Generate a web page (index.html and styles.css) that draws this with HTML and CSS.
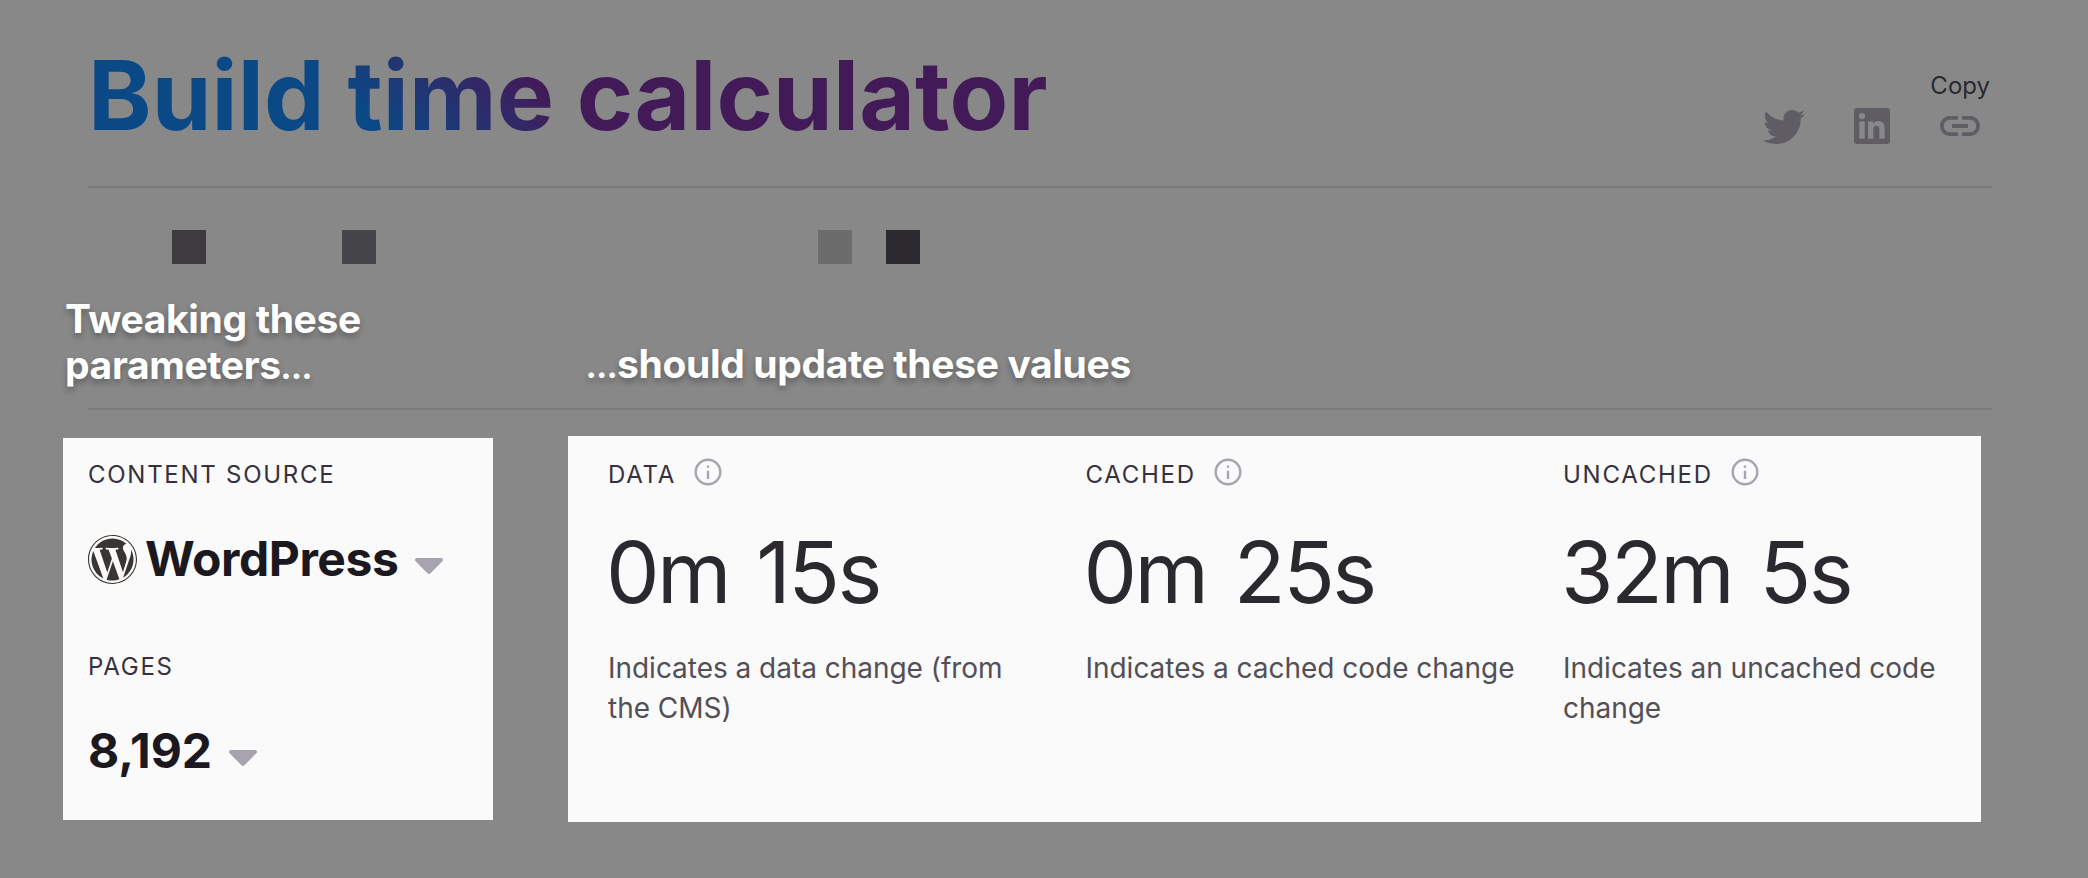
FILE: index.html
```html
<!DOCTYPE html>
<html lang="en">
<head>
<meta charset="utf-8">
<title>Build time calculator</title>
<link rel="stylesheet" href="styles.css">
</head>
<body>
<header class="header">
  <h1 class="title">Build time calculator</h1>
  <div class="share">
    <span class="share-tip">Copy</span>
    <div class="share-icons">
      <svg viewBox="0 0 24 24"><path d="M22.46,6C21.69,6.35 20.86,6.58 20,6.69C20.88,6.16 21.56,5.32 21.88,4.31C21.05,4.81 20.13,5.16 19.16,5.36C18.37,4.5 17.26,4 16,4C13.65,4 11.73,5.92 11.73,8.29C11.73,8.63 11.77,8.96 11.84,9.27C8.28,9.09 5.11,7.38 3,4.79C2.63,5.42 2.42,6.16 2.42,6.94C2.42,8.43 3.17,9.75 4.33,10.5C3.62,10.5 2.96,10.3 2.38,10V10.03C2.38,12.11 3.86,13.85 5.82,14.24C5.46,14.34 5.08,14.39 4.69,14.39C4.42,14.39 4.15,14.36 3.89,14.31C4.43,16 6,17.26 7.89,17.29C6.43,18.45 4.58,19.13 2.56,19.13C2.22,19.13 1.88,19.11 1.54,19.07C3.44,20.29 5.7,21 8.12,21C16,21 20.33,14.46 20.33,8.79C20.33,8.6 20.33,8.42 20.32,8.23C21.16,7.63 21.88,6.87 22.46,6Z"/></svg>
      <svg viewBox="0 0 24 24"><path d="M19.67 3H4.33C3.6 3 3 3.6 3 4.33v15.34C3 20.4 3.6 21 4.33 21h15.34c.73 0 1.33-.6 1.33-1.33V4.33C21 3.6 20.4 3 19.67 3zM8.34 18.34H5.67V9.75h2.67v8.59zM7 8.58a1.55 1.55 0 1 1 0-3.1 1.55 1.55 0 0 1 0 3.1zm11.34 9.76h-2.67v-4.18c0-1 0-2.27-1.39-2.27s-1.6 1.08-1.6 2.2v4.25h-2.66V9.75h2.56v1.17h.04c.36-.67 1.23-1.39 2.53-1.39 2.7 0 3.19 1.78 3.19 4.1v4.71z"/></svg>
      <svg viewBox="0 0 24 24"><path d="M3.9 12c0-1.71 1.39-3.1 3.1-3.1h4V7H7c-2.76 0-5 2.24-5 5s2.24 5 5 5h4v-1.9H7c-1.71 0-3.1-1.39-3.1-3.1zM8 13h8v-2H8v2zm9-6h-4v1.9h4c1.71 0 3.1 1.39 3.1 3.1s-1.39 3.1-3.1 3.1h-4V17h4c2.76 0 5-2.24 5-5s-2.24-5-5-5z"/></svg>
    </div>
  </div>
</header>

<section class="timeline">
  <div class="blocks">
    <i class="block block-a"></i><i class="block block-b"></i><i class="block block-c"></i><i class="block block-d"></i>
  </div>
  <div class="notes">
    <p class="note note-left">Tweaking these<br>parameters<span class="dots">…</span></p>
    <p class="note note-right"><span class="dots">…</span>should update these values</p>
  </div>
</section>

<main class="panels">
  <section class="panel params">
    <h2 class="label">CONTENT SOURCE</h2>
    <div class="choice">
      <svg class="wp" viewBox="0 0 122.52 122.52"><path d="M8.708 61.26c0 20.802 12.089 38.779 29.619 47.298L13.258 39.872a52.354 52.354 0 0 0-4.55 21.388zM96.74 58.608c0-6.495-2.333-10.993-4.334-14.494-2.664-4.329-5.161-7.995-5.161-12.324 0-4.831 3.664-9.328 8.825-9.328.233 0 .454.029.681.042-9.35-8.566-21.807-13.796-35.489-13.796-18.36 0-34.513 9.42-43.91 23.688 1.233.037 2.395.063 3.382.063 5.497 0 14.006-.667 14.006-.667 2.833-.167 3.167 3.994.337 4.329 0 0-2.847.335-6.015.501L48.2 93.547l11.501-34.493-8.188-22.434c-2.83-.166-5.511-.501-5.511-.501-2.832-.166-2.5-4.496.332-4.329 0 0 8.679.667 13.843.667 5.496 0 14.006-.667 14.006-.667 2.835-.167 3.168 3.994.337 4.329 0 0-2.853.335-6.015.501l18.992 56.494 5.242-17.517c2.272-7.269 4.001-12.49 4.001-16.989z"/><path d="M62.184 65.857l-15.768 45.819c4.708 1.384 9.687 2.141 14.846 2.141 6.12 0 11.989-1.058 17.452-2.979a4.615 4.615 0 0 1-.374-.724zM107.376 36.046c.226 1.674.354 3.471.354 5.404 0 5.333-.996 11.328-3.996 18.824l-16.053 46.413c15.624-9.111 26.133-26.038 26.133-45.426.001-9.137-2.333-17.729-6.438-25.215z"/><path d="M61.262 0C27.483 0 0 27.481 0 61.26c0 33.783 27.483 61.263 61.262 61.263 33.778 0 61.265-27.48 61.265-61.263C122.526 27.481 95.04 0 61.262 0zm0 119.715c-32.23 0-58.453-26.223-58.453-58.455 0-32.23 26.222-58.451 58.453-58.451 32.229 0 58.45 26.221 58.45 58.451 0 32.232-26.221 58.455-58.45 58.455z"/></svg>
      <span class="choice-text">WordPress</span>
      <svg class="caret" viewBox="0 0 28 16"><path d="M2 0h24c1.900 0 2.700 1.900 1.400 3.200L15.600 15.200c-.9.900-2.300.9-3.200 0L.6 3.200C-.7 1.900.1 0 2 0z"/></svg>
    </div>
    <h2 class="label label-pages">PAGES</h2>
    <div class="choice">
      <span class="choice-text number">8,192</span>
      <svg class="caret" viewBox="0 0 28 16"><path d="M2 0h24c1.900 0 2.700 1.900 1.400 3.200L15.600 15.200c-.9.900-2.300.9-3.200 0L.6 3.200C-.7 1.900.1 0 2 0z"/></svg>
    </div>
  </section>

  <section class="panel results">
    <article class="result">
      <h2 class="label">DATA<svg class="info" viewBox="0 0 32 32"><circle cx="16" cy="16" r="12.300"/><path d="M16 14.700v8.300M16 9.400v2.400"/></svg></h2>
      <p class="time">0m 15s</p>
      <p class="desc">Indicates a data change (from the CMS)</p>
    </article>
    <article class="result">
      <h2 class="label">CACHED<svg class="info" viewBox="0 0 32 32"><circle cx="16" cy="16" r="12.300"/><path d="M16 14.700v8.300M16 9.400v2.400"/></svg></h2>
      <p class="time">0m 25s</p>
      <p class="desc">Indicates a cached code change</p>
    </article>
    <article class="result">
      <h2 class="label">UNCACHED<svg class="info" viewBox="0 0 32 32"><circle cx="16" cy="16" r="12.300"/><path d="M16 14.700v8.300M16 9.400v2.400"/></svg></h2>
      <p class="time">32m 5s</p>
      <p class="desc">Indicates an uncached code change</p>
    </article>
  </section>
</main>
</body>
</html>
```

FILE: styles.css
```css
* { box-sizing: border-box; }
html, body { margin: 0; height: 878px; overflow: hidden; }
body { background: #888; font-family: Inter, "Liberation Sans", sans-serif; color: #36313d; }
h1, h2, p { margin: 0; font-weight: 400; }
svg { display: block; flex: none; }

.header {
  display: flex;
  justify-content: space-between;
  align-items: flex-start;
  height: 188px;
  margin: 0 96px 0 88px;
  padding-top: 47px;
  border-bottom: 2px solid #7a7a7a;
}
.title {
  font-size: 96px;
  line-height: 96px;
  font-weight: 700;
  letter-spacing: 0.0015em;
  padding-bottom: 16px;
  white-space: nowrap;
  background: linear-gradient(45deg, #0a4886 30%, #431a58 49%);
  -webkit-background-clip: text;
  background-clip: text;
  color: transparent;
}
.share { padding: 23px 8px 0 0; }
.share-tip {
  display: block;
  height: 32px;
  margin-right: -6px;
  text-align: right;
  font-size: 24px;
  line-height: 32px;
  color: #2b292e;
}
.share-icons { display: flex; gap: 40px; fill: #5f5c64; }
.share-icons svg { width: 48px; height: 48px; }

.timeline {
  height: 222px;
  margin: 0 96px 0 88px;
  padding-top: 42px;
  border-bottom: 2px solid #7a7a7a;
}
.blocks { display: flex; height: 34px; padding-left: 84px; }
.block { width: 34px; height: 34px; }
.block-a { background: #3d3a40; }
.block-b { background: #454448; margin-left: 136px; }
.block-c { background: #6c6c6c; margin-left: 442px; }
.block-d { background: #2b292e; margin-left: 34px; }

.notes { display: flex; align-items: flex-end; height: 124px; margin-left: -23px; }
.note {
  font-size: 39px;
  line-height: 46px;
  font-weight: 700;
  letter-spacing: -0.009em;
  color: #fff;
  text-shadow: 0 4px 6px rgba(0, 0, 0, 0.3);
  white-space: nowrap;
}
.note-left { width: 521px; }
.note-right { padding-bottom: 1.5px; }
.dots { font-size: 0.72em; line-height: 1; font-weight: 900; }

.panels { display: flex; gap: 75px; padding: 26px 0 0 62.5px; }
.panel { background: #fafafa; }
.params { width: 430px; height: 382px; margin-top: 2px; padding: 21px 25.5px; }
.results { display: flex; width: 1413.5px; height: 386px; padding: 23px 0 0 40.500px; }
.result { flex: none; width: 477.5px; }

.label {
  display: flex;
  height: 32px;
  font-size: 24px;
  line-height: 32px;
  letter-spacing: 0.072em;
}
.label-pages { margin-top: 32px; }
.choice { display: flex; align-items: center; height: 128px; padding-top: 7px; }
.wp { width: 49px; height: 49px; margin: 2px 8px 0 0; fill: #393532; }
.choice-text { font-size: 48px; line-height: 60px; font-weight: 700; letter-spacing: -0.009em; color: #1b181f; }
.number { letter-spacing: 0; }
.caret { width: 28px; height: 16px; margin: 15px 0 0 17px; fill: #a8a4af; }

.info { width: 32px; height: 32px; margin: -3px 0 0 16px; fill: none; stroke: #a8a4af; stroke-width: 2.400; }
.time {
  margin: 38px 0 0 -2px;
  font-size: 85px;
  line-height: 88px;
  letter-spacing: -0.03em;
  word-spacing: 6px;
  font-kerning: none;
  color: #2b292e;
}
.desc { width: 440px; margin-top: 31px; font-size: 28px; line-height: 40px; letter-spacing: -0.001em; color: #524f56; }
```
